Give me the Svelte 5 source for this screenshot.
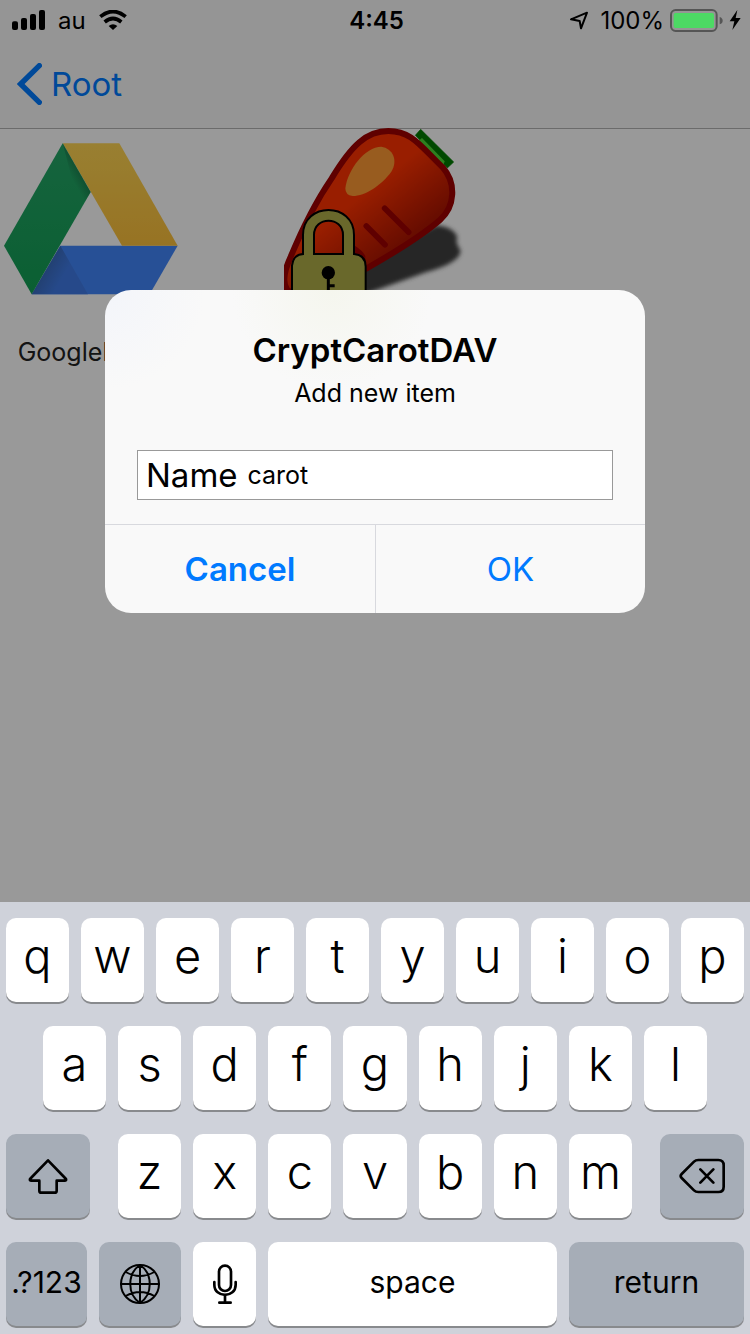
<script>
  const topRow = [...'qwertyuiop'];
  const homeRow = [...'asdfghjkl'];
  const bottomRow = [...'zxcvbnm'];

  let name = $state('carot');

  const type = (text) => (name += text);
  const erase = () => (name = name.slice(0, -1));
</script>

<div class="screen">
  <div class="stage">
    <div class="status">
      <div class="side">
        <svg class="signal" viewBox="36 30 99 60" aria-hidden="true">
          <rect x="36" y="64" width="18" height="26" rx="6" />
          <rect x="63" y="54" width="18" height="36" rx="6" />
          <rect x="90" y="42" width="18" height="48" rx="6" />
          <rect x="117" y="30" width="18" height="60" rx="6" />
        </svg>
        <span>au</span>
        <svg class="wifi" viewBox="0 0 84 60" aria-hidden="true">
          <path d="M4 20Q42-11 80 20" fill="none" stroke="#000" stroke-width="11" />
          <path d="M17 36Q42 15 67 36" fill="none" stroke="#000" stroke-width="11" />
          <path d="M29 48Q42 37 55 48L42 60Z" />
        </svg>
      </div>
      <strong>4:45</strong>
      <div class="side right">
        <svg class="location" viewBox="0 0 60 60" aria-hidden="true">
          <path d="M6 28L54 8L36 55L32 33Z" fill="none" stroke="#000" stroke-width="6" stroke-linejoin="round" />
        </svg>
        <span>100%</span>
        <svg class="battery" viewBox="0 0 159 69" aria-hidden="true">
          <rect x="3" y="3" width="137" height="63" rx="14" fill="none" stroke="#555" stroke-width="6" />
          <rect x="11" y="12" width="121" height="45" rx="6" fill="#4cd964" />
          <path d="M149 24Q158 27 158 35T149 46Z" fill="#555" />
        </svg>
        <svg class="bolt" viewBox="0 0 36 60" aria-hidden="true">
          <path d="M25 0L2 34H16L10 60L35 24H20Z" />
        </svg>
      </div>
    </div>

    <nav>
      <button class="back">
        <svg viewBox="0 0 75 126" aria-hidden="true">
          <path d="M67 8L11 63L67 118" fill="none" stroke="#007aff" stroke-width="16" stroke-linecap="round" />
        </svg>
        <span>Root</span>
      </button>
    </nav>

    <main>
      <figure>
        <svg viewBox="0 27 546 546" aria-hidden="true">
          <defs>
            <linearGradient id="drive-green" x1="0" y1="0" x2="0" y2="1">
              <stop offset="0" stop-color="#25a768" />
              <stop offset="1" stop-color="#129f55" />
            </linearGradient>
            <linearGradient id="drive-yellow" x1="0" y1="0" x2="0" y2="1">
              <stop offset="0" stop-color="#ffd553" />
              <stop offset="1" stop-color="#fcc03b" />
            </linearGradient>
            <linearGradient id="drive-fold" gradientUnits="userSpaceOnUse" x1="138" y1="450" x2="185" y2="477">
              <stop offset="0" stop-color="#3a6cc0" />
              <stop offset="1" stop-color="#407be6" />
            </linearGradient>
            <linearGradient id="drive-shade" gradientUnits="userSpaceOnUse" x1="205" y1="157" x2="230" y2="143">
              <stop offset="0" stop-color="#176841" stop-opacity="0" />
              <stop offset="1" stop-color="#176841" stop-opacity="0.5" />
            </linearGradient>
          </defs>
          <path d="M181 377H533L449 523H95Z" fill="#4286fa" />
          <path d="M181 377L264 523H95Z" fill="url(#drive-fold)" />
          <path d="M188 70H358L533 377H366Z" fill="url(#drive-yellow)" />
          <path d="M188 70L272 216L95 523L12 377Z" fill="url(#drive-green)" />
          <path d="M188 70L272 216L240 270Z" fill="url(#drive-shade)" />
        </svg>
        <figcaption>GoogleDrive</figcaption>
      </figure>
      <figure>
        <svg viewBox="42 27 546 546" aria-hidden="true">
          <defs>
            <linearGradient id="carrot" x1="0.3" y1="0.2" x2="0.75" y2="0.75">
              <stop offset="0.35" stop-color="#ff3300" />
              <stop offset="1" stop-color="#9c1000" />
            </linearGradient>
            <filter id="soft" x="-20%" y="-20%" width="140%" height="140%">
              <feGaussianBlur stdDeviation="7" />
            </filter>
            <clipPath id="carrot-frame"><path d="M42 20H600V580H42Z" /></clipPath>
          </defs>
          <g clip-path="url(#carrot-frame)">
            <path d="M240 440L500 316Q552 322 562 352Q554 366 572 392Q570 428 470 456L250 535Z" fill="#404040" filter="url(#soft)" />
            <path d="M436 46L452 28L551 126L532 144Z" fill="#007b00" stroke="#007b00" stroke-width="2" stroke-linejoin="round" />
            <path d="M446 62L456 54L524 124L520 136Z" fill="#4ed535" />
            <path d="M52 510Q30 480 62 410Q120 270 185 175C245 75 290 33 355 33C425 33 450 77 518 142C560 190 555 260 510 300Q440 360 290 445Q120 560 52 510Z" fill="url(#carrot)" stroke="#9e0000" stroke-width="18" />
            <path d="M226 205C232 150 285 80 334 80C368 85 385 120 364 155C335 195 285 228 248 228Q226 226 226 205Z" fill="#fd9935" />
            <path d="M344 265L416 337M289 318L345 374" stroke="#9e0000" stroke-width="17" stroke-linecap="round" />
            <path d="M252 376Q278 392 286 408V440L252 405Z" fill="#9e0000" />
            <path d="M99 402V345C99 245 252 245 252 345V402H219V345C219 288 132 288 132 345V402Z" fill="#afad49" stroke="#000" stroke-width="6" />
            <path d="M66 520V437Q70 402 101 402H252Q287 405 287 440V520Z" fill="#afad49" stroke="#000" stroke-width="6" />
            <path d="M102 396H129V410H102ZM222 396H249V410H222Z" fill="#afad49" />
            <circle cx="175" cy="458" r="20" />
            <path d="M175 470V530M175 497H194" stroke="#000" stroke-width="9" />
          </g>
        </svg>
      </figure>
      <figure></figure>
    </main>

    <div class="overlay">
      <div class="dialog" role="dialog" aria-modal="true" aria-labelledby="dialog-title">
        <div class="content">
          <h2 id="dialog-title">CryptCarotDAV</h2>
          <p>Add new item</p>
          <div class="field">
            <label for="item-name">Name</label>
            <input id="item-name" type="text" bind:value={name} />
          </div>
        </div>
        <div class="actions">
          <button class="cancel">Cancel</button>
          <button>OK</button>
        </div>
      </div>
    </div>
  </div>

  <div class="keyboard">
    <div class="row">
      {#each topRow as letter}
        <button class="key letter" onclick={() => type(letter)}>{letter}</button>
      {/each}
    </div>
    <div class="row home">
      {#each homeRow as letter}
        <button class="key letter" onclick={() => type(letter)}>{letter}</button>
      {/each}
    </div>
    <div class="row spread">
      <button class="key dark shift" aria-label="shift">
        <svg width="40" height="36" viewBox="0 0 120 108" aria-hidden="true">
          <path d="M60 7L114 63Q116 68 110 68H86V98Q86 104 80 104H40Q34 104 34 98V68H10Q4 68 6 63Z" />
        </svg>
      </button>
      <div class="row letters">
        {#each bottomRow as letter}
          <button class="key letter" onclick={() => type(letter)}>{letter}</button>
        {/each}
      </div>
      <button class="key dark shift" aria-label="delete" onclick={erase}>
        <svg width="46" height="36" viewBox="0 0 138 108" aria-hidden="true">
          <path d="M58 6H118Q134 6 134 22V86Q134 102 118 102H58Q50 102 45 97L8 60Q2 54 8 48L45 11Q50 6 58 6ZM64 34L103 74M103 34L64 74" />
        </svg>
      </button>
    </div>
    <div class="row">
      <button class="key dark numbers">.?123</button>
      <button class="key dark globe" aria-label="next keyboard">
        <svg width="42" height="42" viewBox="0 0 126 126" aria-hidden="true">
          <circle cx="63" cy="63" r="57" />
          <path d="M63 6V120M6 63H120M63 6C24 32 24 94 63 120M63 6C102 32 102 94 63 120M20 27Q63 51 106 27M20 99Q63 75 106 99" />
        </svg>
      </button>
      <button class="key mic" aria-label="dictate">
        <svg width="26" height="42" viewBox="0 0 78 126" aria-hidden="true">
          <rect x="21" y="8" width="36" height="76" rx="18" />
          <path d="M7 57V65C7 106 71 106 71 65V57M39 96V119M22 119H56" />
        </svg>
      </button>
      <button class="key space" onclick={() => type(' ')}>space</button>
      <button class="key dark return">return</button>
    </div>
  </div>
</div>

<style>
  :global(body) {
    margin: 0;
  }
  .screen {
    display: flex;
    flex-direction: column;
    min-height: 100vh;
    font-family: Inter, 'Liberation Sans', sans-serif;
    color: #000;
  }
  button {
    border: 0;
    padding: 0;
    background: none;
    font: inherit;
    color: inherit;
  }
  .stage {
    position: relative;
    flex: 1;
    display: flex;
    flex-direction: column;
    background: #fff;
  }
  .status {
    position: relative;
    z-index: 2;
    display: grid;
    grid-template-columns: 1fr auto 1fr;
    align-items: center;
    height: 40px;
    padding: 0 9px 0 12px;
    background: #959595;
    font-size: 24px;
  }
  .status strong {
    font-weight: 600;
  }
  .side {
    display: flex;
    align-items: center;
    gap: 13px;
  }
  .right {
    justify-content: flex-end;
    gap: 6px;
  }
  .signal {
    width: 33px;
    height: 20px;
  }
  .wifi {
    width: 28px;
    height: 20px;
  }
  .location {
    width: 20px;
    height: 20px;
    margin-right: 5px;
  }
  .battery {
    width: 53px;
    height: 23px;
  }
  .bolt {
    width: 12px;
    height: 20px;
  }
  nav {
    display: flex;
    align-items: center;
    height: 88px;
    padding: 0 17px;
    background: #f9f9f9;
    border-bottom: 1px solid #b2b2b2;
  }
  .back {
    display: flex;
    align-items: center;
    gap: 9px;
    font-size: 33px;
    color: #007aff;
  }
  .back svg {
    width: 25px;
    height: 42px;
  }
  main {
    display: flex;
    justify-content: space-between;
  }
  figure {
    width: 182px;
    margin: 0;
  }
  figure svg {
    display: block;
    width: 100%;
    overflow: visible;
  }
  figcaption {
    margin-top: 24px;
    font-size: 25px;
    line-height: 34px;
    text-align: center;
    color: #222;
  }
  .overlay {
    position: absolute;
    inset: 0;
    display: flex;
    align-items: center;
    justify-content: center;
    background: rgba(0, 0, 0, 0.4);
  }
  .dialog {
    width: 72%;
    overflow: hidden;
    border-radius: 26px;
    background:
      radial-gradient(circle at 0 0, #f3f5fa, transparent 100px),
      radial-gradient(circle at 42% 0, #f5f6ee, transparent 100px),
      #f9f9f9;
  }
  .content {
    padding: 38px 32px 24px;
    text-align: center;
  }
  h2 {
    margin: 0;
    font-size: 33px;
    font-weight: 600;
    line-height: 44px;
  }
  p {
    margin: 4px 0 40px;
    font-size: 25px;
    line-height: 34px;
  }
  .field {
    display: flex;
    align-items: center;
    gap: 10px;
    height: 48px;
    padding: 0 8px;
    border: 1px solid #999;
    background: #fff;
  }
  .field label {
    font-size: 33px;
  }
  .field input {
    flex: 1;
    min-width: 0;
    padding: 0;
    border: 0;
    outline: 0;
    background: none;
    font: inherit;
    font-size: 25px;
    color: #000;
  }
  .actions {
    display: grid;
    grid-template-columns: 1fr 1fr;
    border-top: 1px solid #d8d9de;
  }
  .actions button {
    height: 88px;
    font-size: 33px;
    color: #007aff;
  }
  .actions button + button {
    border-left: 1px solid #d8d9de;
  }
  .actions .cancel {
    font-weight: 600;
  }
  .keyboard {
    display: flex;
    flex-direction: column;
    gap: 24px;
    padding: 16px 6px 8px;
    background: #cfd2da;
  }
  .row {
    display: flex;
    gap: 12px;
  }
  .home {
    padding: 0 5%;
  }
  .spread {
    gap: 28px;
  }
  .letters {
    flex: 514 1 0;
  }
  .key {
    display: flex;
    align-items: center;
    justify-content: center;
    flex: 1 1 0;
    min-width: 0;
    height: 84px;
    padding-bottom: 4px;
    border-radius: 10px;
    background: #fff;
    box-shadow: 0 2px 0 #888a8d;
    font-size: 30px;
    box-sizing: border-box;
  }
  .letter {
    padding-bottom: 10px;
    font-size: 47px;
    font-weight: 350;
  }
  .key svg {
    flex: none;
    fill: none;
    stroke: #000;
    stroke-width: 8px;
    stroke-linecap: round;
    stroke-linejoin: round;
  }
  .key:has(svg) {
    padding-bottom: 0;
  }
  .globe svg {
    stroke-width: 6px;
  }
  .dark {
    background: #a6adb7;
  }
  .shift {
    flex: 84 1 0;
  }
  .numbers {
    flex: 81 1 0;
  }
  .globe {
    flex: 82 1 0;
  }
  .mic {
    flex: 63 1 0;
  }
  .space {
    flex: 289 1 0;
  }
  .return {
    flex: 175 1 0;
  }
</style>
